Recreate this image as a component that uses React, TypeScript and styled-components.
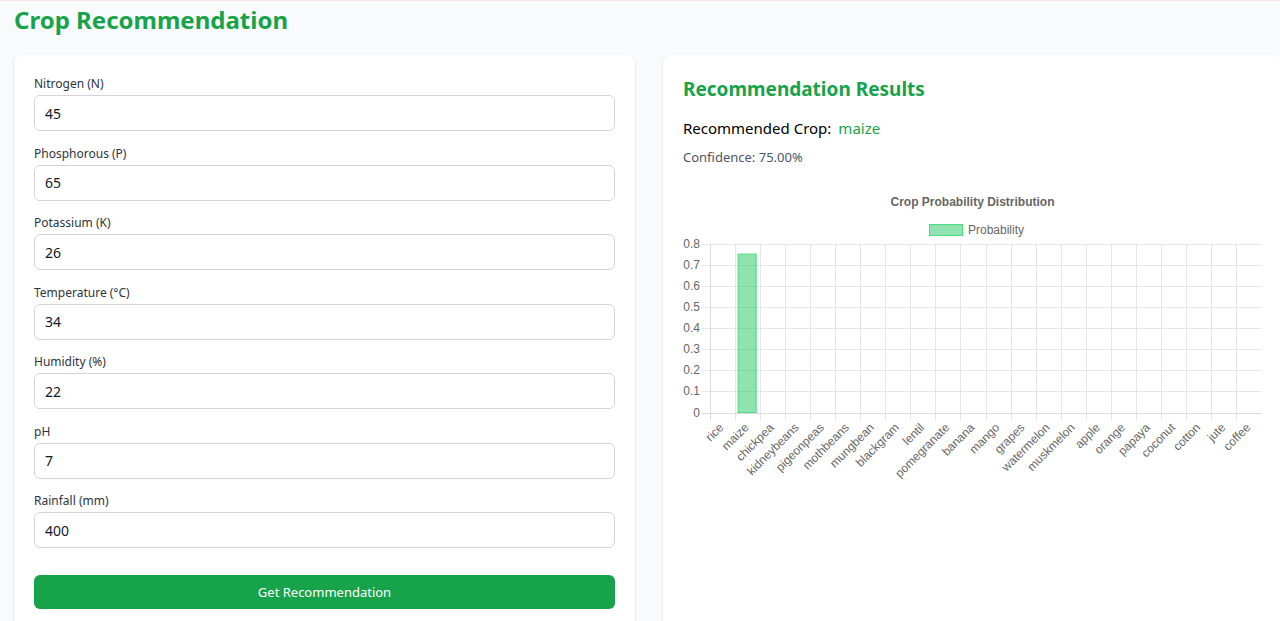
import React from "react";
import styled, { createGlobalStyle } from "styled-components";

const GlobalStyle = createGlobalStyle`
  html, body { margin: 0; padding: 0; }
  body {
    background: #f9fafb;
    border-top: 1px solid #fbe4e8;
    font-family: "Noto Sans", "Open Sans", Arial, sans-serif;
    overflow: hidden;
    width: 1280px;
    height: 621px;
  }
`;

const Page = styled.div`
  padding: 0 0 0 14px;
`;

const Title = styled.h1`
  margin: 0 0 16px 0;
  font-size: 24px;
  line-height: 38px;
  font-weight: 700;
  color: #16a34a;
`;

const Grid = styled.div`
  display: grid;
  grid-template-columns: 621px 619px;
  gap: 28px;
`;

const Card = styled.div`
  background: #ffffff;
  border-radius: 8px;
  box-shadow: 0 1px 3px rgba(0, 0, 0, 0.1), 0 1px 2px rgba(0, 0, 0, 0.06);
  padding: 20px;
`;

const Field = styled.div`
  display: flex;
  flex-direction: column;
  margin-bottom: 13.5px;
`;

const Label = styled.label`
  font-size: 12px;
  line-height: 18px;
  font-weight: 400;
  color: #2d3440;
  margin-bottom: 2px;
`;

const Input = styled.input`
  box-sizing: border-box;
  height: 36px;
  width: 100%;
  border: 1px solid #d1d5db;
  border-radius: 6px;
  padding: 0 10px;
  font-family: inherit;
  font-size: 14px;
  color: #111827;
  background: #fff;
  outline: none;
`;

const Button = styled.button`
  margin-top: 13.5px;
  width: 100%;
  height: 34px;
  border: none;
  border-radius: 6px;
  background: #16a34a;
  color: #ffffff;
  font-family: inherit;
  font-size: 13px;
  cursor: pointer;
`;

const ResultTitle = styled.h2`
  margin: 0 0 13px 0;
  font-size: 19px;
  line-height: 28px;
  font-weight: 700;
  color: #16a34a;
`;

const CropLine = styled.div`
  font-size: 15px;
  line-height: 24px;
  font-weight: 400;
  color: #000000;
  display: flex;
  gap: 7px;
`;

const CropName = styled.span`
  color: #16a34a;
`;

const Confidence = styled.div`
  margin-top: 7px;
  font-size: 13px;
  line-height: 20px;
  color: #4b5563;
`;

const ChartBox = styled.div`
  margin-top: 18px;
`;

const fields = [
  { label: "Nitrogen (N)", value: "45" },
  { label: "Phosphorous (P)", value: "65" },
  { label: "Potassium (K)", value: "26" },
  { label: "Temperature (°C)", value: "34" },
  { label: "Humidity (%)", value: "22" },
  { label: "pH", value: "7" },
  { label: "Rainfall (mm)", value: "400" },
];

const crops = [
  "rice", "maize", "chickpea", "kidneybeans", "pigeonpeas", "mothbeans",
  "mungbean", "blackgram", "lentil", "pomegranate", "banana", "mango",
  "grapes", "watermelon", "muskmelon", "apple", "orange", "papaya",
  "coconut", "cotton", "jute", "coffee",
];
const probs: Record<string, number> = { maize: 0.75 };

const Chart: React.FC = () => {
  const W = 580;
  const H = 320;
  const left = 26.5;
  const right = 578.5;
  const top = 58.5;
  const bottom = 227.5;
  const step = (right - left) / crops.length;
  const yScale = (v: number) => bottom - (v / 0.8) * (bottom - top);
  const font = '"Liberation Sans", Arial, sans-serif';
  const grid = "#e6e6e6";
  const ticks = [0, 0.1, 0.2, 0.3, 0.4, 0.5, 0.6, 0.7, 0.8];
  return (
    <svg width={W} height={H} style={{ display: "block" }}>
      <text x={289.5} y={18} textAnchor="middle" dominantBaseline="middle"
        fontFamily={font} fontSize={12} fontWeight={700} fill="#666">
        Crop Probability Distribution
      </text>
      <rect x={246.5} y={39.5} width={33} height={11} fill="rgba(34,197,94,0.5)" stroke="#4ade80" strokeWidth={1} />
      <text x={285} y={46} dominantBaseline="middle" fontFamily={font} fontSize={12} fill="#666">
        Probability
      </text>
      {ticks.map((t) => {
        const y = Math.round(yScale(t)) + 0.5;
        return (
          <g key={t}>
            <line x1={left - 8} x2={right} y1={y} y2={y} stroke={grid} />
            <text x={17} y={y} textAnchor="end" dominantBaseline="middle"
              fontFamily={font} fontSize={12} fill="#666">
              {t === 0 ? "0" : t.toFixed(1)}
            </text>
          </g>
        );
      })}
      {crops.map((c, i) => {
        const x = Math.round(left + i * step) + 0.5;
        return <line key={"g" + c} x1={x} x2={x} y1={top} y2={bottom + 8} stroke={grid} />;
      })}
      <line x1={Math.round(left) + 0.5} x2={Math.round(left) + 0.5} y1={top} y2={bottom + 8} stroke="#dcdcdc" />
      <line x1={left - 8} x2={right} y1={Math.round(bottom) + 0.5} y2={Math.round(bottom) + 0.5} stroke="#dcdcdc" />
      {crops.map((c, i) => {
        const p = probs[c] || 0;
        if (!p) return null;
        const cx = left + (i + 0.5) * step;
        const bw = step * 0.72;
        const y = yScale(p);
        return (
          <rect key={"b" + c} x={cx - bw / 2} y={y} width={bw} height={bottom - y}
            fill="rgba(34,197,94,0.5)" stroke="#4ade80" strokeWidth={1} />
        );
      })}
      {crops.map((c, i) => {
        const cx = left + (i + 0.5) * step;
        const ty = 241;
        return (
          <text key={"l" + c} x={cx} y={ty} textAnchor="end" dominantBaseline="middle"
            transform={`rotate(-45 ${cx} ${ty})`} fontFamily={font} fontSize={12} fill="#666">
            {c}
          </text>
        );
      })}
    </svg>
  );
};

export default function App() {
  return (
    <>
      <GlobalStyle />
      <Page>
        <Title>Crop Recommendation</Title>
        <Grid>
          <Card>
            {fields.map((f) => (
              <Field key={f.label}>
                <Label>{f.label}</Label>
                <Input type="number" defaultValue={f.value} />
              </Field>
            ))}
            <Button>Get Recommendation</Button>
          </Card>
          <Card>
            <ResultTitle>Recommendation Results</ResultTitle>
            <CropLine>
              Recommended Crop: <CropName>maize</CropName>
            </CropLine>
            <Confidence>Confidence: 75.00%</Confidence>
            <ChartBox>
              <Chart />
            </ChartBox>
          </Card>
        </Grid>
      </Page>
    </>
  );
}
